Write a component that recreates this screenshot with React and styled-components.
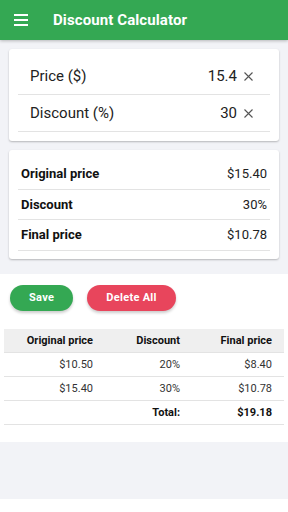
import React from "react";
import styled, { createGlobalStyle } from "styled-components";

const GlobalStyle = createGlobalStyle`
  html, body {
    margin: 0;
    padding: 0;
    background: #ffffff;
    font-family: Roboto, "Liberation Sans", sans-serif;
  }
`;

const Page = styled.div`
  width: 288px;
  height: 512px;
  display: flex;
  flex-direction: column;
  background: #ffffff;
`;

const Header = styled.header`
  height: 40px;
  background: #34a853;
  display: flex;
  align-items: center;
  box-shadow: 0 1px 3px rgba(0, 0, 0, 0.25);
  position: relative;
  z-index: 1;
`;

const MenuButton = styled.div`
  width: 14px;
  margin-left: 14px;
  display: flex;
  flex-direction: column;
  gap: 3px;

  span {
    display: block;
    height: 2px;
    background: #ffffff;
  }
`;

const Title = styled.h1`
  margin: 0 0 0 25px;
  font-size: 15px;
  font-weight: 700;
  color: #ffffff;
  letter-spacing: 0.1px;
`;

const TopArea = styled.div`
  background: #f2f3f7;
  padding: 9px 9px 15px;
  display: flex;
  flex-direction: column;
  gap: 9px;
`;

const Card = styled.div`
  background: #ffffff;
  border-radius: 3px;
  padding: 9px 9px ${(p) => p.$bottom}px;
  box-shadow: 0 1px 2px rgba(0, 0, 0, 0.25);
`;

const InputRow = styled.div`
  height: 36px;
  border-bottom: 1px solid #e3e3e3;
  display: flex;
  align-items: center;
  padding: 0 17px 0 12px;
  font-size: 15px;
  color: #222222;
`;

const Grow = styled.div`
  flex: 1;
`;

const ClearIcon = styled.svg`
  margin-left: 7px;
  width: 9px;
  height: 9px;
  stroke: #555555;
  stroke-width: 1.1;
`;

const ResultRow = styled.div`
  height: 29.5px;
  border-bottom: 1px solid #e3e3e3;
  display: flex;
  align-items: center;
  justify-content: space-between;
  padding: 0 3px;
  font-size: 13px;
  color: #222222;

  b {
    font-weight: 700;
    color: #111111;
  }
`;

const Lower = styled.div`
  background: #ffffff;
  padding: 11px 4px 17px;
`;

const Buttons = styled.div`
  display: flex;
  gap: 14px;
  padding-left: 6px;
  margin-bottom: 18px;
`;

const Pill = styled.button`
  height: 26px;
  border: none;
  border-radius: 13px;
  padding: 0 ${(p) => p.$pad}px;
  background: ${(p) => p.$color};
  color: #ffffff;
  font-family: Roboto, "Liberation Sans", sans-serif;
  font-size: 11px;
  font-weight: 700;
  letter-spacing: 0.3px;
  box-shadow: 0 2px 3px rgba(0, 0, 0, 0.2);
`;

const Table = styled.div`
  display: grid;
  grid-template-columns: 93px 90px 97px;
`;

const Cell = styled.div`
  height: 23px;
  display: flex;
  align-items: center;
  justify-content: flex-end;
  padding-right: ${(p) => p.$pr}px;
  font-size: 11px;
  font-weight: ${(p) => (p.$bold ? 700 : 400)};
  color: ${(p) => (p.$bold ? "#111111" : "#333333")};
  background: ${(p) => (p.$head ? "#efefef" : "transparent")};
  border-bottom: 1px solid #e3e3e3;
`;

const Filler = styled.div`
  flex: 1;
  background: #f2f3f7;
  margin-bottom: 13px;
`;

const pads = [4, 7, 12];

const rows = [
  ["$10.50", "20%", "$8.40"],
  ["$15.40", "30%", "$10.78"],
];

const Clear = () => (
  <ClearIcon viewBox="0 0 9 9" fill="none">
    <path d="M0.5 0.5L8.5 8.5M8.5 0.5L0.5 8.5" />
  </ClearIcon>
);

export default function App() {
  return (
    <Page>
      <GlobalStyle />
      <Header>
        <MenuButton>
          <span />
          <span />
          <span />
        </MenuButton>
        <Title>Discount Calculator</Title>
      </Header>
      <TopArea>
        <Card $bottom={9}>
          <InputRow>
            <Grow>Price ($)</Grow>
            15.4
            <Clear />
          </InputRow>
          <InputRow>
            <Grow>Discount (%)</Grow>
            30
            <Clear />
          </InputRow>
        </Card>
        <Card $bottom={8}>
          <ResultRow>
            <b>Original price</b>
            <span>$15.40</span>
          </ResultRow>
          <ResultRow>
            <b>Discount</b>
            <span>30%</span>
          </ResultRow>
          <ResultRow>
            <b>Final price</b>
            <span>$10.78</span>
          </ResultRow>
        </Card>
      </TopArea>
      <Lower>
        <Buttons>
          <Pill $color="#34a853" $pad={19}>Save</Pill>
          <Pill $color="#e8455c" $pad={19}>Delete All</Pill>
        </Buttons>
        <Table>
          {["Original price", "Discount", "Final price"].map((h, i) => (
            <Cell key={h} $head $bold $pr={pads[i]}>
              {h}
            </Cell>
          ))}
          {rows.map((r) =>
            r.map((v, i) => (
              <Cell key={r[0] + i} $pr={pads[i]}>
                {v}
              </Cell>
            ))
          )}
          <Cell $pr={pads[0]} />
          <Cell $bold $pr={pads[1]}>Total:</Cell>
          <Cell $bold $pr={pads[2]}>$19.18</Cell>
        </Table>
      </Lower>
      <Filler />
    </Page>
  );
}
